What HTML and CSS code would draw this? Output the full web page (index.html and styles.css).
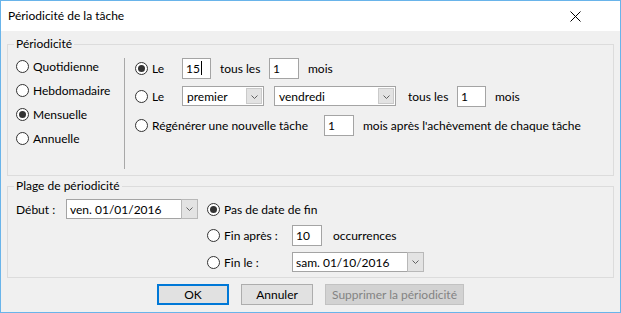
FILE: index.html
```html
<!DOCTYPE html>
<html lang="fr">
<head>
<meta charset="utf-8">
<title>Périodicité de la tâche</title>
<link rel="stylesheet" href="styles.css">
</head>
<body>
<div class="window">
  <div class="titlebar">
    <span class="title">Périodicité de la tâche</span>
    <svg class="close" width="11" height="11" viewBox="0 0 11 11"><path d="M0.5 0.5 L10.5 10.5 M10.5 0.5 L0.5 10.5" stroke="#000" stroke-width="1" fill="none"/></svg>
  </div>
  <div class="body">
    <section class="group g1">
      <div class="group-title">Périodicité</div>
      <div class="g1-content">
        <div class="types">
          <div class="opt row-24"><span class="radio"></span><span>Quotidienne</span></div>
          <div class="opt row-24"><span class="radio"></span><span>Hebdomadaire</span></div>
          <div class="opt row-24"><span class="radio checked"></span><span>Mensuelle</span></div>
          <div class="opt row-24"><span class="radio"></span><span>Annuelle</span></div>
        </div>
        <div class="sep"></div>
        <div class="pattern">
          <div class="prow pr1">
            <div class="opt w47"><span class="radio checked"></span><span>Le</span></div>
            <div class="field w29">15<span class="caret"></span></div>
            <span class="txt ml9 w49">tous les</span>
            <div class="field w30">1</div>
            <span class="txt ml9">mois</span>
          </div>
          <div class="prow pr2">
            <div class="opt w47"><span class="radio"></span><span>Le</span></div>
            <div class="combo w82"><span class="ctext">premier</span><span class="cbtn"><svg width="7" height="4" viewBox="0 0 7 4"><path d="M0.5 0.5 L3.5 3.5 L6.5 0.5" stroke="#606060" fill="none"/></svg></span></div>
            <div class="combo w122 ml10"><span class="ctext">vendredi</span><span class="cbtn"><svg width="7" height="4" viewBox="0 0 7 4"><path d="M0.5 0.5 L3.5 3.5 L6.5 0.5" stroke="#606060" fill="none"/></svg></span></div>
            <span class="txt ml12 w49">tous les</span>
            <div class="field w29">1</div>
            <span class="txt ml9">mois</span>
          </div>
          <div class="prow pr3">
            <div class="opt w189"><span class="radio"></span><span>Régénérer une nouvelle tâche</span></div>
            <div class="field w30">1</div>
            <span class="txt ml9">mois après l'achèvement de chaque tâche</span>
          </div>
        </div>
      </div>
    </section>

    <section class="group g2">
      <div class="group-title">Plage de périodicité</div>
      <div class="g2-content">
        <div class="start">
          <span class="txt w50">Début :</span>
          <div class="dpick w132"><span class="dfield">ven. 01/01/2016</span><span class="dbtn"><svg width="7" height="4" viewBox="0 0 7 4"><path d="M0.5 0.5 L3.5 3.5 L6.5 0.5" stroke="#606060" fill="none"/></svg></span></div>
        </div>
        <div class="ends">
          <div class="erow er1">
            <div class="opt"><span class="radio checked"></span><span>Pas de date de fin</span></div>
          </div>
          <div class="erow er2">
            <div class="opt w85"><span class="radio"></span><span>Fin après :</span></div>
            <div class="field w30">10</div>
            <span class="txt ml11">occurrences</span>
          </div>
          <div class="erow er3">
            <div class="opt w85"><span class="radio"></span><span>Fin le :</span></div>
            <div class="dpick w132"><span class="dfield">sam. 01/10/2016</span><span class="dbtn"><svg width="7" height="4" viewBox="0 0 7 4"><path d="M0.5 0.5 L3.5 3.5 L6.5 0.5" stroke="#606060" fill="none"/></svg></span></div>
          </div>
        </div>
      </div>
    </section>

    <div class="buttons">
      <button class="btn default">OK</button>
      <button class="btn">Annuler</button>
      <button class="btn disabled">Supprimer la périodicité</button>
    </div>
  </div>
</div>
</body>
</html>
```

FILE: styles.css
```css
* { box-sizing: border-box; }
html, body { margin: 0; padding: 0; }
body {
  font-family: Lato, "Noto Sans", sans-serif;
  font-size: 12px;
  color: #000;
  background: #f0f0f0;
}
.window {
  width: 621px;
  height: 313px;
  border: 1px solid #69b4ea;
  background: #f0f0f0;
  display: flex;
  flex-direction: column;
  overflow: hidden;
}
.titlebar {
  height: 30px;
  background: #fff;
  display: flex;
  align-items: center;
  justify-content: space-between;
  padding: 0 39px 0 7px;
  flex: none;
}
.title { font-size: 12px; line-height: 30px; }
.close { display: block; }

.body { flex: 1; display: flex; flex-direction: column; }

.group {
  border: 1px solid #dcdcdc;
  margin: 0 6px 0 6px;
}
.g1 { margin-top: 13px; height: 132px; }
.g2 { margin-top: 10px; height: 92px; }
.group-title {
  margin: -9px 0 0 6px;
  padding: 0 2px;
  line-height: 16px;
  height: 16px;
  background: #f0f0f0;
  width: fit-content;
}

.g1-content { display: flex; }
.types { width: 116px; padding: 2px 0 0 8px; }
.row-24 { height: 24px; }
.sep { width: 1px; height: 111px; margin-top: 6px; background: #a8a8a8; }
.pattern { margin-left: 10px; display: flex; flex-direction: column; }
.prow { display: flex; align-items: center; height: 22px; }
.pr1 { margin-top: 5px; }
.pr2 { margin-top: 6px; }
.pr3 { margin-top: 7px; }

.opt { display: flex; align-items: center; gap: 4px; white-space: nowrap; flex: none; }
.radio {
  width: 13px; height: 13px;
  border: 1px solid #333;
  border-radius: 50%;
  background: #fff;
  display: grid;
  place-items: center;
  flex: none;
}
.radio.checked::after {
  content: "";
  width: 7px; height: 7px;
  border-radius: 50%;
  background: #333;
}

.txt { white-space: nowrap; flex: none; }
.w29 { width: 29px; }
.w30 { width: 30px; }
.w47 { width: 47px; }
.w49 { width: 49px; }
.w50 { width: 50px; }
.w82 { width: 82px; }
.w85 { width: 85px; }
.w122 { width: 122px; }
.w132 { width: 132px; }
.w189 { width: 189px; }
.ml9 { margin-left: 9px; }
.ml10 { margin-left: 10px; }
.ml11 { margin-left: 11px; }
.ml12 { margin-left: 12px; }

.field {
  height: 21px;
  border: 1px solid #a4a4a4;
  background: #fff;
  padding: 0 3px;
  display: flex;
  align-items: center;
  flex: none;
}
.caret { width: 1px; height: 14px; background: #000; margin-left: 1px; }

.combo {
  height: 20px;
  border: 1px solid #a4a4a4;
  background: #fff;
  display: flex;
  align-items: stretch;
  padding: 1px;
  flex: none;
}
.ctext { flex: 1; padding-left: 3px; display: flex; align-items: center; }
.cbtn {
  width: 16px;
  background: #e3e3e3;
  border: 1px solid #cacaca;
  display: flex;
  justify-content: center;
  align-items: flex-end;
  padding-bottom: 4px;
}
.cbtn svg, .dbtn svg { display: block; }

.g2-content { display: flex; }
.start { display: flex; align-items: center; height: 22px; margin-top: 4px; padding-left: 8px; flex: none; }
.dpick { display: flex; height: 20px; flex: none; }
.dfield {
  flex: 1;
  border: 1px solid #a4a4a4;
  border-right: none;
  background: #fff;
  padding-left: 3px;
  display: flex;
  align-items: center;
}
.dbtn {
  width: 17px;
  background: #e3e3e3;
  border: 1px solid #b8b8b8;
  display: flex;
  justify-content: center;
  align-items: center;
}
.ends { margin-left: 9px; display: flex; flex-direction: column; }
.erow { display: flex; align-items: center; height: 22px; }
.er1 { margin-top: 4px; }
.er2 { margin-top: 4px; }
.er3 { margin-top: 5px; }

.buttons {
  display: flex;
  gap: 12px;
  margin-top: 6px;
  padding-left: 156px;
}
.btn {
  font-family: inherit;
  font-size: 12px;
  color: #000;
  height: 21px;
  width: 72px;
  background: #e1e1e1;
  border: 1px solid #adadad;
  padding: 0;
  margin: 0;
}
.btn.default { border: 2px solid #0078d7; }
.btn.disabled { width: 139px; background: #d2d2d2; border-color: #c2c2c2; color: #838383; }
```
